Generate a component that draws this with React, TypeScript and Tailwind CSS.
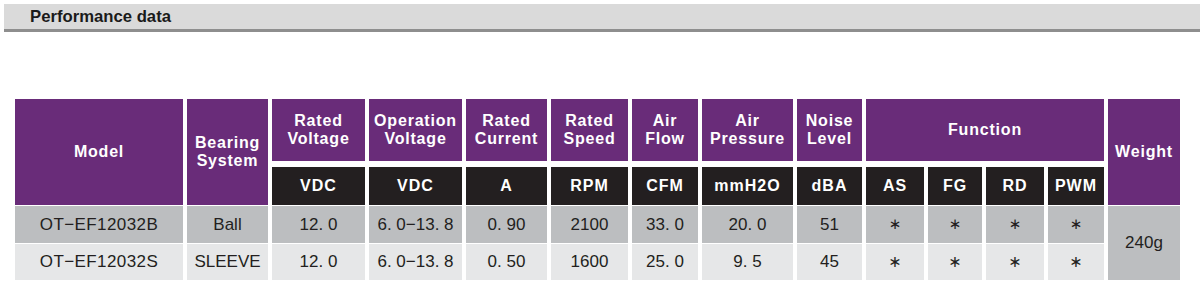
import React from "react";

const P = "bg-[#692c79] text-white font-bold flex items-center justify-center text-center leading-[18px] tracking-[0.8px] text-[16px]";
const K = "bg-[#231f20] text-white font-bold flex items-center justify-center text-center tracking-[1px] text-[16px]";
const G1 = "bg-[#bcbec0] text-[#231f20] flex items-center justify-center text-[17px]";
const G2 = "bg-[#e6e7e8] text-[#231f20] flex items-center justify-center text-[17px]";

const mids = [
  { h: ["Rated", "Voltage"], u: "VDC", r1: "12. 0", r2: "12. 0", small: false },
  { h: ["Operation", "Voltage"], u: "VDC", r1: "6. 0−13. 8", r2: "6. 0−13. 8", small: true },
  { h: ["Rated", "Current"], u: "A", r1: "0. 90", r2: "0. 50", small: false },
  { h: ["Rated", "Speed"], u: "RPM", r1: "2100", r2: "1600", small: false },
  { h: ["Air", "Flow"], u: "CFM", r1: "33. 0", r2: "25. 0", small: false },
  { h: ["Air", "Pressure"], u: "mmH2O", r1: "20. 0", r2: "9. 5", small: false },
  { h: ["Noise", "Level"], u: "dBA", r1: "51", r2: "45", small: false },
];

const colStart = ["col-start-3", "col-start-4", "col-start-5", "col-start-6", "col-start-7", "col-start-8", "col-start-9"];
const fnStart = ["col-start-10", "col-start-11", "col-start-12", "col-start-13"];

export default function App() {
  return (
    <div className="w-[1200px] h-[285px] bg-white overflow-hidden" style={{ fontFamily: '"Liberation Sans", Arial, sans-serif' }}>
      <div className="ml-[4px] mt-[4px] h-[28px] bg-[#dadada] border-b-[3px] border-[#8e8e8e] flex items-center pl-[26px]">
        <span className="text-[16.7px] font-bold text-[#1a1a1a]">Performance data</span>
      </div>
      <div className="ml-[15px] mt-[67px] grid grid-cols-[168px_81px_93px_93px_81px_77px_66px_91px_65px_58px_54px_58px_56px_72px] grid-rows-[62px_4px_38px_37px_36px] gap-x-[4px] gap-y-px">
        <div className={`${P} col-start-1 row-start-1 row-span-3`}>Model</div>
        <div className={`${P} col-start-2 row-start-1 row-span-3`}>
          <div>Bearing<br />System</div>
        </div>
        {mids.map((m, i) => (
          <React.Fragment key={i}>
            <div className={`${P} ${colStart[i]} row-start-1 ${m.small ? "text-[14px] leading-[17px]" : ""}`}>
              <div>{m.h[0]}<br />{m.h[1]}</div>
            </div>
            <div className={`${K} ${colStart[i]} row-start-3`}>{m.u}</div>
            <div className={`${G1} ${colStart[i]} row-start-4`}>{m.r1}</div>
            <div className={`${G2} ${colStart[i]} row-start-5`}>{m.r2}</div>
          </React.Fragment>
        ))}
        <div className={`${P} col-start-10 col-span-4 row-start-1`}>Function</div>
        {["AS", "FG", "RD", "PWM"].map((f, i) => (
          <React.Fragment key={f}>
            <div className={`${K} ${fnStart[i]} row-start-3`}>{f}</div>
            <div className={`${G1} ${fnStart[i]} row-start-4 text-[#6d6e70]`}>
              <span className="text-[15px]" style={{ fontFamily: '"DejaVu Sans", sans-serif' }}>∗</span>
            </div>
            <div className={`${G2} ${fnStart[i]} row-start-5`}>
              <span className="text-[16px]" style={{ fontFamily: '"DejaVu Sans", sans-serif' }}>∗</span>
            </div>
          </React.Fragment>
        ))}
        <div className={`${P} col-start-14 row-start-1 row-span-3`}>Weight</div>

        <div className={`${G1} col-start-1 row-start-4 tracking-[0.4px]`}>OT−EF12032B</div>
        <div className={`${G1} col-start-2 row-start-4 text-[16px]`}>Ball</div>
        <div className={`${G2} col-start-1 row-start-5 tracking-[0.4px]`}>OT−EF12032S</div>
        <div className={`${G2} col-start-2 row-start-5 text-[16px]`}>SLEEVE</div>
        <div className={`${G1} col-start-14 row-start-4 row-span-2`}>240g</div>
      </div>
    </div>
  );
}
